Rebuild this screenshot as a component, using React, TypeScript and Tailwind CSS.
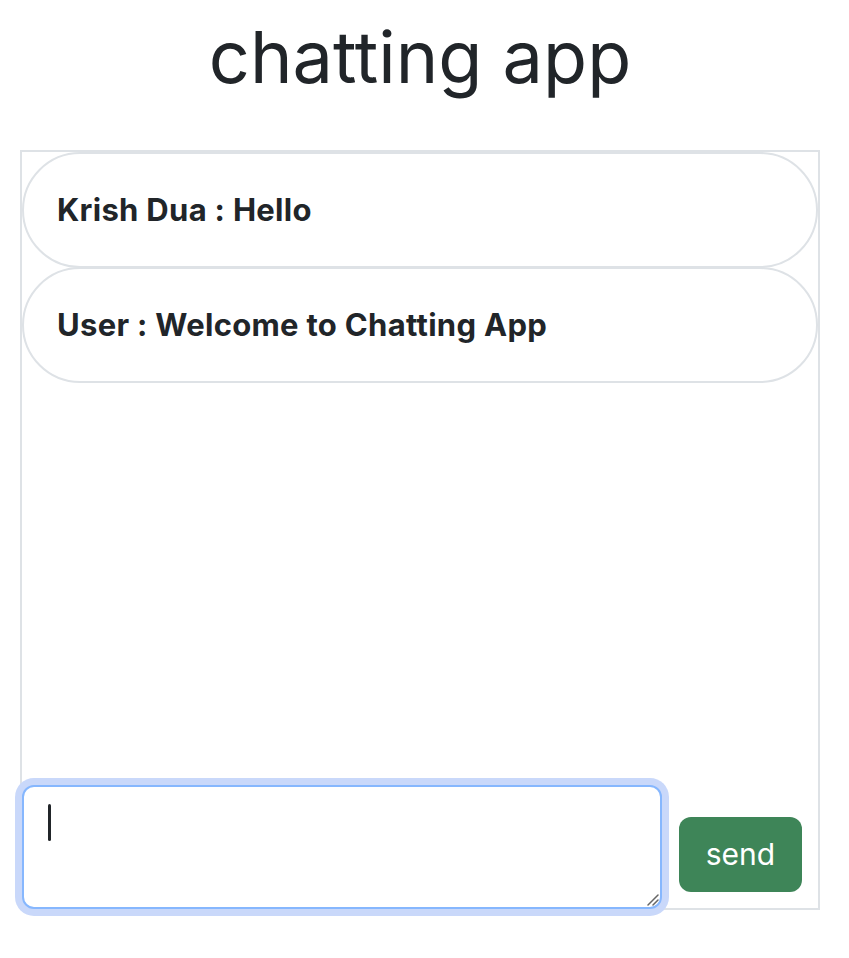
export default function App() {
  const messages = [
    { id: 1, user: "Krish Dua", text: "Hello" },
    { id: 2, user: "User", text: "Welcome to Chatting App" },
  ];

  return (
    <div className="min-h-screen bg-white text-[#212529] font-['Inter',sans-serif]">
      <div className="w-[800px] ml-[20px] pt-[14px]">
        <h1 className="text-center text-[72px] leading-[1.2] font-normal mb-[50px]">chatting app</h1>

        <div className="h-[760px] border-2 border-[#dee2e6] flex flex-col justify-between">
          <div className="flex flex-col">
            {messages.map((m) => (
              <div
                key={m.id}
                className="h-[116px] -mb-[1px] flex items-center px-[33px] border-2 border-[#dee2e6] rounded-full"
              >
                <span className="text-[31px] font-bold tracking-[0.3px]">
                  {m.user} : {m.text}
                </span>
              </div>
            ))}
          </div>

          <div className="flex items-end gap-[17px] -mb-[1px]">
            <div className="relative">
              <textarea
                readOnly
                className="block w-[640px] h-[124px] border-2 border-[#86b7fe] rounded-[12px] shadow-[0_0_0_7px_#c9d8fa] outline-none bg-white resize-none"
              />
              <span className="absolute left-[26px] top-[19px] w-[3px] h-[37px] rounded-full bg-[#212529]" />
              <svg className="absolute right-[3px] bottom-[3px]" width="14" height="14" viewBox="0 0 14 14">
                <path d="M13 3L3 13M13 8L8 13" stroke="#666" strokeWidth="1.5" strokeLinecap="round" />
              </svg>
            </div>
            <button className="mb-[17px] w-[123px] h-[75px] rounded-[12px] bg-[#3e8558] text-white text-[30px]">
              send
            </button>
          </div>
        </div>
      </div>
    </div>
  );
}
